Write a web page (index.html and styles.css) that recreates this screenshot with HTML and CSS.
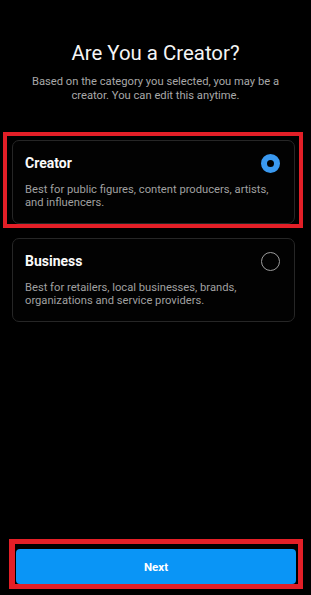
FILE: index.html
```html
<!DOCTYPE html>
<html lang="en">
<head>
<meta charset="utf-8">
<title>Are You a Creator?</title>
<link rel="stylesheet" href="styles.css">
</head>
<body>
<main class="screen">
  <header class="intro">
    <h1 class="title">Are You a Creator?</h1>
    <p class="subtitle">Based on the category you selected, you may be a creator. You can edit this anytime.</p>
  </header>

  <div class="highlight highlight-card">
    <section class="option">
      <div class="option-head">
        <h2 class="option-title">Creator</h2>
        <span class="radio radio-on"></span>
      </div>
      <p class="option-desc">Best for public figures, content producers, artists, and influencers.</p>
    </section>
  </div>

  <section class="option option-plain">
    <div class="option-head">
      <h2 class="option-title">Business</h2>
      <span class="radio"></span>
    </div>
    <p class="option-desc">Best for retailers, local businesses, brands, organizations and service providers.</p>
  </section>

  <div class="highlight highlight-button">
    <button class="next" type="button">Next</button>
  </div>
</main>
</body>
</html>
```

FILE: styles.css
```css
* { box-sizing: border-box; }

html, body {
  margin: 0;
  padding: 0;
  background: #000;
}

body {
  font-family: Roboto, "Noto Sans", "Liberation Sans", sans-serif;
  color: #fff;
}

.screen {
  display: flex;
  flex-direction: column;
  height: 595px;
  padding-bottom: 6px;
}

.intro {
  padding: 41px 28px 0;
  text-align: center;
}

.title {
  margin: 0;
  font-size: 20.4px;
  line-height: 24px;
  font-weight: 400;
  color: #f5f5f5;
}

.subtitle {
  margin: 10px 0 0;
  font-size: 11.2px;
  line-height: 14px;
  color: #a8a8a8;
}

.highlight {
  border: 4px solid #e31f27;
}

.highlight-card {
  margin: 29px 8px 0 3px;
  padding: 4px 4px 0 5px;
}

.option {
  height: 84px;
  border: 1px solid #262626;
  border-radius: 7px;
  padding: 13px 14px 0 12px;
  background: #020202;
}

.option-plain {
  margin: 10px 16px 0 12px;
}

.option-head {
  display: flex;
  align-items: center;
  justify-content: space-between;
  height: 18px;
}

.option-title {
  margin: 0;
  font-size: 14px;
  line-height: 18px;
  font-weight: 700;
  color: #fafafa;
}

.radio {
  width: 19px;
  height: 19px;
  border-radius: 50%;
  border: 1.6px solid #9c9c9c;
}

.radio-on {
  border: 6.5px solid #3a99f0;
  background: #000;
}

.option-desc {
  margin: 11px 0 0;
  font-size: 11.2px;
  line-height: 13px;
  color: #a0a0a0;
}

.highlight-button {
  margin: auto 8px 0 9px;
  padding: 5px 2px 0 1px;
  border-width: 5px;
  border-left-width: 6px;
}

.next {
  display: block;
  width: 100%;
  height: 35px;
  border: 0;
  border-radius: 4px;
  background: #0a95f6;
  color: #fff;
  font-family: Roboto, "Noto Sans", "Liberation Sans", sans-serif;
  font-size: 11.5px;
  font-weight: 700;
}
```
